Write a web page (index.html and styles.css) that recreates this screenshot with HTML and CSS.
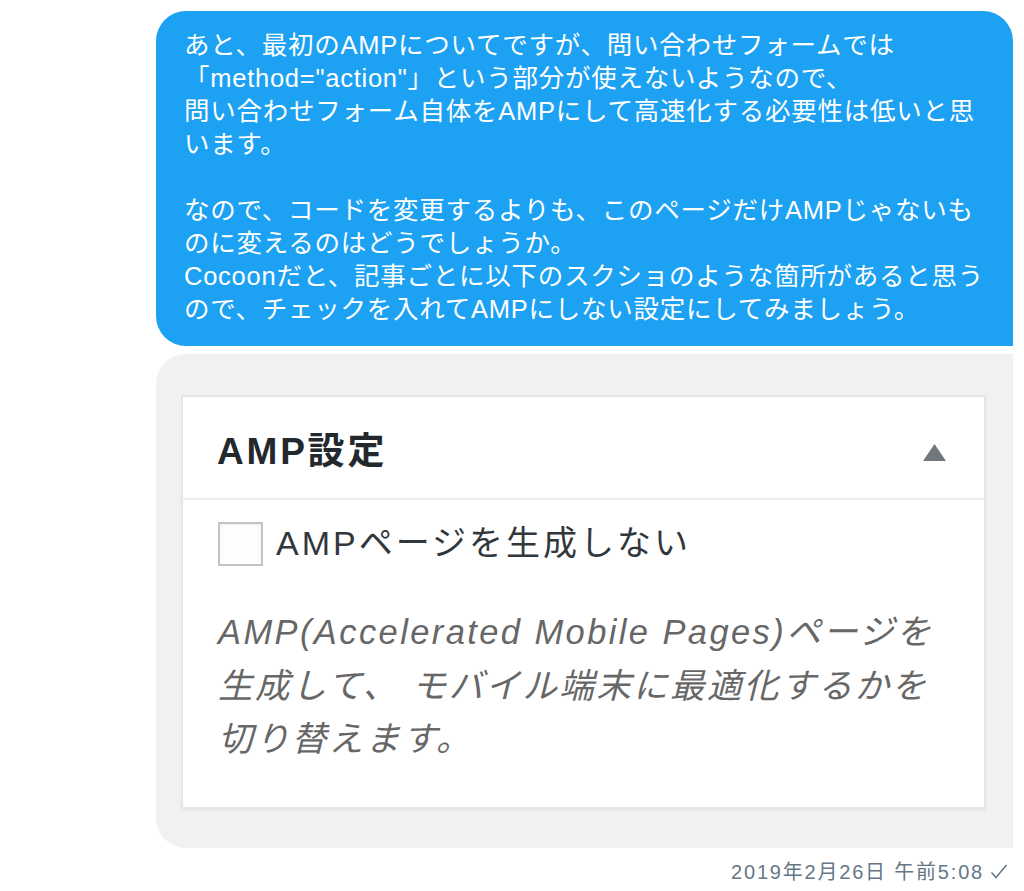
FILE: index.html
```html
<!DOCTYPE html>
<html lang="ja">
<head>
<meta charset="utf-8">
<title>DM</title>
<link rel="stylesheet" href="styles.css">
</head>
<body>
<div class="thread">
  <div class="bubble-text">
    <p>あと、最初のAMPについてですが、問い合わせフォームでは<br>「method="action"」という部分が使えないようなので、<br>問い合わせフォーム自体をAMPにして高速化する必要性は低いと思<br>います。</p>
    <p>なので、コードを変更するよりも、このページだけAMPじゃないも<br>のに変えるのはどうでしょうか。<br>Cocoonだと、記事ごとに以下のスクショのような箇所があると思う<br>ので、チェックを入れてAMPにしない設定にしてみましょう。</p>
  </div>
  <div class="bubble-media">
    <div class="card">
      <div class="card-head">
        <h2 class="card-title">AMP設定</h2>
        <svg class="toggle" width="23" height="17" viewBox="0 0 23 17"><path d="M11.5 0 L23 17 L0 17 Z" fill="#72777c"/></svg>
      </div>
      <div class="card-body">
        <label class="check-row"><span class="checkbox"></span><span class="check-label">AMPページを生成しない</span></label>
        <p class="desc">AMP(Accelerated Mobile Pages)ページを<br>生成して、<span class="gap"></span>モバイル端末に最適化するかを<br>切り替えます。</p>
      </div>
    </div>
  </div>
  <div class="meta"><span>2019年2月26日 午前5:08</span><svg class="tick" width="18" height="15" viewBox="0 0 18 15"><path d="M1.5 8.5 L6 13.5 L16.5 1" fill="none" stroke="#657786" stroke-width="1.5"/></svg></div>
</div>
</body>
</html>
```
FILE: styles.css
```css
html, body {
  margin: 0;
  padding: 0;
  background: #ffffff;
}
body {
  font-family: "Liberation Sans", "Noto Sans CJK JP", sans-serif;
}
.thread {
  display: flex;
  flex-direction: column;
  align-items: flex-end;
  padding: 11px 11px 0 0;
}
.bubble-text {
  width: 857px;
  box-sizing: border-box;
  background: #1da1f2;
  color: #ffffff;
  border-radius: 30px 30px 0 30px;
  padding: 18px 16px 20px 28px;
  font-size: 25.5px;
  letter-spacing: 0.75px;
  line-height: 33px;
  white-space: nowrap;
}
.bubble-text p {
  margin: 0;
}
.bubble-text p + p {
  margin-top: 33px;
}
.bubble-media {
  width: 857px;
  box-sizing: border-box;
  margin-top: 8px;
  background: #f1f1f1;
  border-radius: 30px 0 0 30px;
  padding: 41px 27px 39px 25px;
}
.card {
  background: #ffffff;
  border: 2px solid #e5e5e5;
  box-shadow: 0 2px 2px rgba(0, 0, 0, 0.04);
}
.card-head {
  height: 101px;
  border-bottom: 2px solid #eeeeee;
  display: flex;
  align-items: center;
  justify-content: space-between;
  padding: 0 38px 0 34px;
}
.card-title {
  margin: 0;
  font-size: 37px;
  letter-spacing: 2.8px;
  font-weight: bold;
  color: #23282d;
}
.toggle {
  display: block;
  margin-top: 10px;
}
.card-body {
  padding: 21px 35px 40px 35px;
}
.check-row {
  display: flex;
  align-items: center;
  gap: 13px;
}
.checkbox {
  width: 41px;
  height: 40px;
  border: 2.5px solid #c2c5c8;
  background: #fdfdfd;
  box-shadow: inset 0 1px 2px rgba(0, 0, 0, 0.07);
  flex: none;
}
.check-label {
  font-size: 34px;
  letter-spacing: 3px;
  color: #32373c;
  line-height: 45px;
}
.desc {
  margin: 40px 0 0 0;
  font-size: 34.5px;
  letter-spacing: 2.4px;
  line-height: 53.5px;
  font-style: italic;
  color: #676767;
  white-space: nowrap;
}
.gap {
  display: inline-block;
  width: 12px;
}
.meta {
  margin-top: 12px;
  padding-right: 5px;
  display: flex;
  align-items: center;
  gap: 6px;
  font-size: 20px;
  letter-spacing: 1.8px;
  line-height: 24px;
  color: #657786;
}
.tick {
  display: block;
}
```
